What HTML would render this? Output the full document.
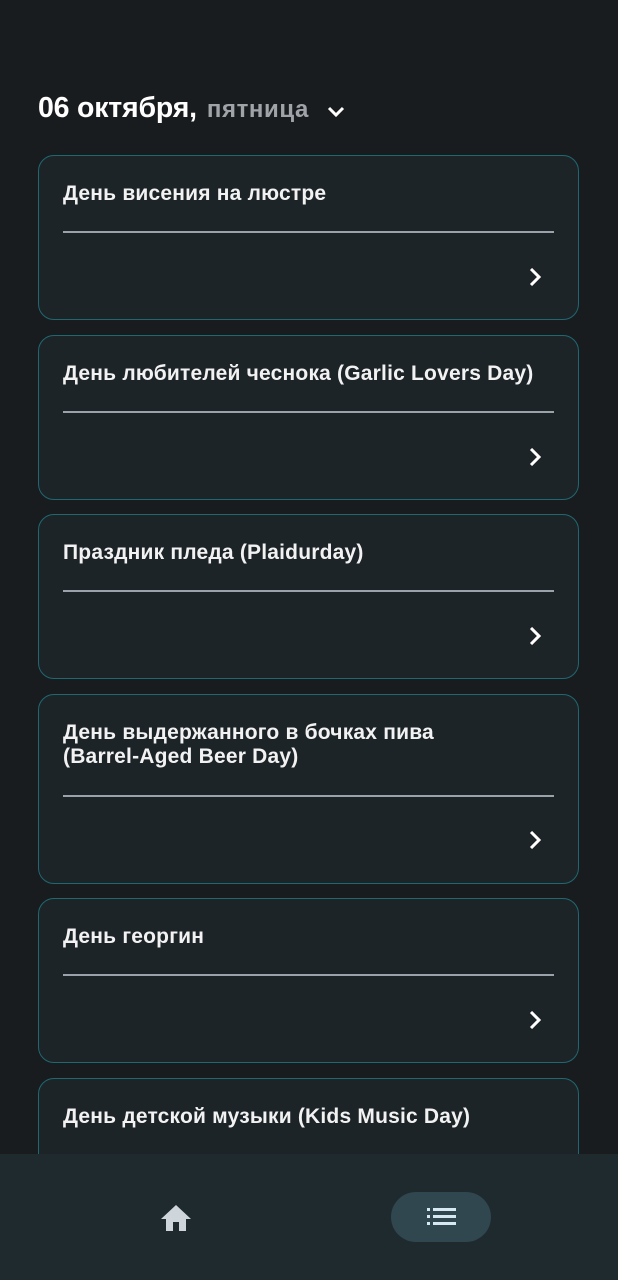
<!DOCTYPE html>
<html><head><meta charset="utf-8"><style>
body{margin:0;width:618px;height:1280px;background:#191c1e;font-family:"Liberation Sans",sans-serif;position:relative;overflow:hidden}
.h{position:absolute;left:38px;top:92px;color:#fff;font-size:28.5px;font-weight:bold;letter-spacing:-0.2px}
.h span{color:#a0a4a8;font-size:24px;margin-left:10px;letter-spacing:0.6px}
.card{position:absolute;left:38px;width:539px;border:1.5px solid #1f6872;border-radius:16px;background:#1d2428}
.t{position:absolute;left:24px;top:26px;right:10px;color:#f2f2f2;font-size:21px;font-weight:bold;line-height:24px;letter-spacing:0.2px}
.d{position:absolute;left:24px;right:24px;height:2px;background:#9aa3aa}
.c{position:absolute;right:34px;width:18px;height:18px}
.nav{position:absolute;left:0;top:1154px;width:618px;height:126px;background:#1f2a2f}
.pill{position:absolute;left:391px;top:38px;width:100px;height:50px;border-radius:25px;background:#30474f}
</style></head><body>
<div class="h">06 октября,<span>пятница</span></div>
<svg style="position:absolute;left:326px;top:105px" width="20" height="14" viewBox="0 0 20 14"><path d="M3 3l7 7 7-7" stroke="#fff" stroke-width="3" fill="none"/></svg>

<div class="card" style="top:155px;height:163px"><div class="t">День висения на люстре</div><div class="d" style="top:75px"></div><svg class="c" style="top:112px" viewBox="0 0 18 18"><path d="M5 1l8 8-8 8" stroke="#fff" stroke-width="3" fill="none"/></svg></div>
<div class="card" style="top:335px;height:163px"><div class="t">День любителей чеснока (Garlic Lovers Day)</div><div class="d" style="top:75px"></div><svg class="c" style="top:112px" viewBox="0 0 18 18"><path d="M5 1l8 8-8 8" stroke="#fff" stroke-width="3" fill="none"/></svg></div>
<div class="card" style="top:514px;height:163px"><div class="t">Праздник пледа (Plaidurday)</div><div class="d" style="top:75px"></div><svg class="c" style="top:112px" viewBox="0 0 18 18"><path d="M5 1l8 8-8 8" stroke="#fff" stroke-width="3" fill="none"/></svg></div>
<div class="card" style="top:694px;height:188px"><div class="t">День выдержанного в бочках пива<br>(Barrel-Aged Beer Day)</div><div class="d" style="top:100px"></div><svg class="c" style="top:136px" viewBox="0 0 18 18"><path d="M5 1l8 8-8 8" stroke="#fff" stroke-width="3" fill="none"/></svg></div>
<div class="card" style="top:898px;height:163px"><div class="t">День георгин</div><div class="d" style="top:75px"></div><svg class="c" style="top:112px" viewBox="0 0 18 18"><path d="M5 1l8 8-8 8" stroke="#fff" stroke-width="3" fill="none"/></svg></div>
<div class="card" style="top:1078px;height:163px"><div class="t">День детской музыки (Kids Music Day)</div></div>

<div class="nav">
<svg style="position:absolute;left:160px;top:49px" width="32" height="30" viewBox="0 0 32 30"><path d="M16 2L1 16h5v12h7v-9h6v9h7V16h5z" fill="#cfd6db"/></svg>
<div class="pill"><svg style="position:absolute;left:36px;top:14px" width="30" height="22" viewBox="0 0 30 22"><g fill="#d6e8f2"><rect x="0" y="2" width="3" height="3"/><rect x="6" y="2" width="23" height="3"/><rect x="0" y="9" width="3" height="3"/><rect x="6" y="9" width="23" height="3"/><rect x="0" y="16" width="3" height="3"/><rect x="6" y="16" width="23" height="3"/></g></svg></div>
</div>
</body></html>
